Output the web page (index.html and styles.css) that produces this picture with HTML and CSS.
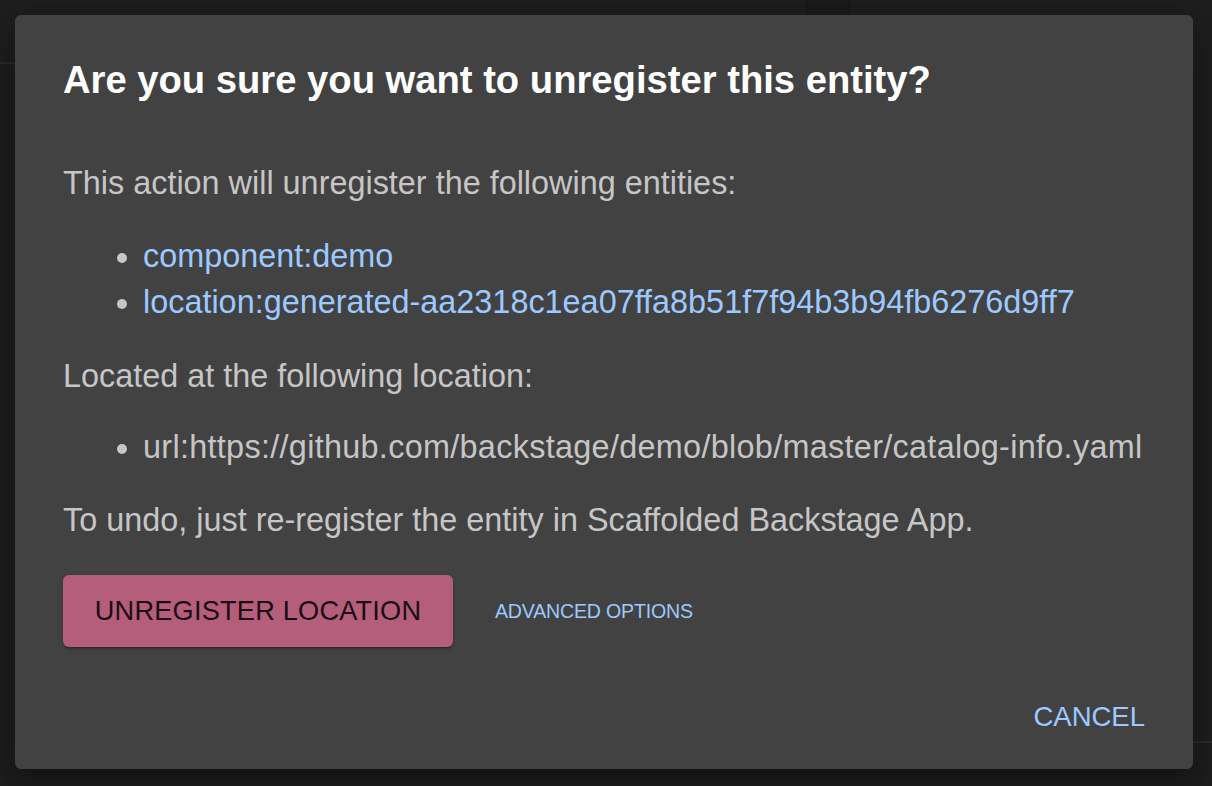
FILE: index.html
```html
<!DOCTYPE html>
<html lang="en">
<head>
<meta charset="utf-8">
<title>Unregister entity</title>
<link rel="stylesheet" href="styles.css">
</head>
<body>
<div class="page">
  <div class="bg-strip"></div>
  <div class="bg-line bg-line-left"></div>
  <div class="bg-line bg-line-right"></div>
  <div class="dialog" role="dialog">
    <h2 class="title">Are you sure you want to unregister this entity?</h2>
    <div class="content">
      <p class="text">This action will unregister the following entities:</p>
      <ul class="list list-entities">
        <li><a class="link" href="#">component:demo</a></li>
        <li><a class="link" href="#">location:generated-aa2318c1ea07ffa8b51f7f94b3b94fb6276d9ff7</a></li>
      </ul>
      <p class="text">Located at the following location:</p>
      <ul class="list list-location">
        <li class="url">url:https://github.com/backstage/demo/blob/master/catalog-info.yaml</li>
      </ul>
      <p class="text">To undo, just re-register the entity in Scaffolded Backstage App.</p>
      <div class="actions">
        <button class="btn-danger" type="button">UNREGISTER LOCATION</button>
        <button class="btn-text" type="button">ADVANCED OPTIONS</button>
      </div>
    </div>
    <div class="footer">
      <button class="btn-cancel" type="button">CANCEL</button>
    </div>
  </div>
</div>
</body>
</html>
```
FILE: styles.css
```css
html, body {
  margin: 0;
  padding: 0;
  background: #1d1d1d;
  font-family: "Liberation Sans", Arial, Helvetica, sans-serif;
}

.page {
  position: relative;
  width: 1212px;
  height: 786px;
  box-sizing: border-box;
  padding: 15px 19px 17px 15px;
  background: #1e1e1e;
  overflow: hidden;
}

.bg-strip {
  position: absolute;
  left: 805px;
  top: 0;
  width: 46px;
  height: 15px;
  background: #1a1a1a;
}

.bg-line {
  position: absolute;
  height: 2px;
  background: #2a2a2a;
}
.bg-line-left { left: 0; top: 62px; width: 15px; }
.bg-line-right { right: 0; top: 741px; width: 19px; }

.dialog {
  position: relative;
  width: 1178px;
  height: 754px;
  box-sizing: border-box;
  background: #424242;
  border-radius: 6px;
  box-shadow: 0 11px 15px -7px rgba(0,0,0,0.2), 0 24px 38px 3px rgba(0,0,0,0.14), 0 9px 46px 8px rgba(0,0,0,0.12);
  display: flex;
  flex-direction: column;
  padding: 41px 48px 34px 48px;
}

.title {
  margin: 0;
  font-size: 38.2px;
  line-height: 48px;
  font-weight: 700;
  color: #ffffff;
}

.content {
  padding-top: 56px;
}

.text {
  margin: 0;
  font-size: 32.4px;
  line-height: 46px;
  color: #c6c6c6;
}

.list {
  margin: 27px 0;
  padding-left: 80px;
  font-size: 32.4px;
  line-height: 46px;
  color: #c6c6c6;
}
.list li::marker { color: #c6c6c6; }
.list-entities { margin: 27px 0 28px; }
.list-location { margin: 25px 0 27px; }

.url { letter-spacing: 0.3px; }

.link {
  color: #9cc9ff;
  text-decoration: none;
}

.actions {
  display: flex;
  align-items: center;
  gap: 42px;
  margin-top: 32px;
}

.btn-danger {
  width: 390px;
  height: 72px;
  border: 0;
  border-radius: 6px;
  background: #b45e7b;
  color: #1a0c11;
  font-family: inherit;
  font-size: 27.2px;
  letter-spacing: 0.2px;
  box-shadow: 0 3px 1px -2px rgba(0,0,0,0.2), 0 2px 2px 0 rgba(0,0,0,0.14), 0 1px 5px 0 rgba(0,0,0,0.12);
  padding: 0;
}

.btn-text {
  border: 0;
  background: transparent;
  color: #9cc9ff;
  font-family: inherit;
  font-size: 19.6px;
  letter-spacing: -0.2px;
  padding: 0;
}

.footer {
  margin-top: auto;
  display: flex;
  justify-content: flex-end;
}

.btn-cancel {
  border: 0;
  background: transparent;
  color: #9cc9ff;
  font-family: inherit;
  font-size: 27.5px;
  line-height: 36px;
  padding: 0;
}
```
